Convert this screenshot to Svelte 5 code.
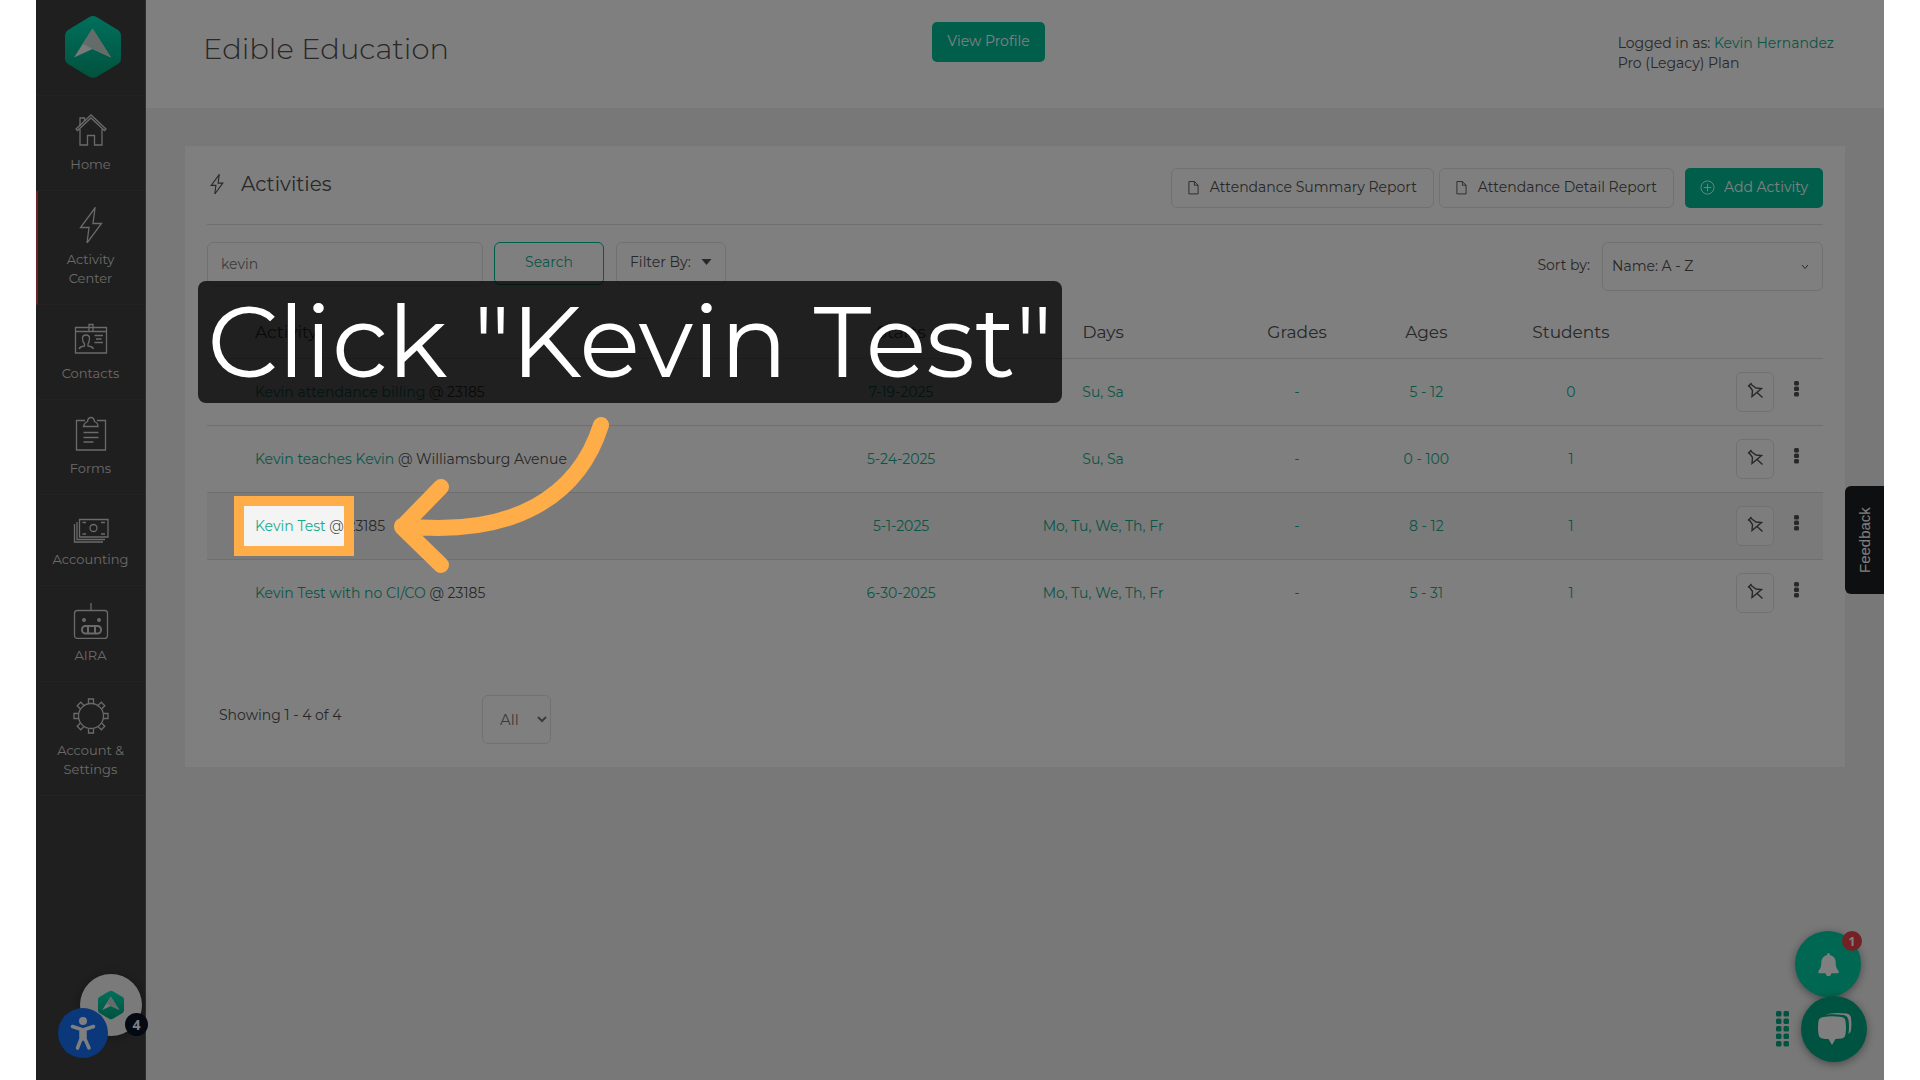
<script>
  const rows = [
    { name: 'Kevin attendance billing', place: '23185', starts: '7-19-2025', days: 'Su, Sa', grades: '-', ages: '5 - 12', students: '0' },
    { name: 'Kevin teaches Kevin', place: 'Williamsburg Avenue', starts: '5-24-2025', days: 'Su, Sa', grades: '-', ages: '0 - 100', students: '1' },
    { name: 'Kevin Test', place: '23185', starts: '5-1-2025', days: 'Mo, Tu, We, Th, Fr', grades: '-', ages: '8 - 12', students: '1', active: true },
    { name: 'Kevin Test with no CI/CO', place: '23185', starts: '6-30-2025', days: 'Mo, Tu, We, Th, Fr', grades: '-', ages: '5 - 31', students: '1' }
  ];
  const nav = [
    { label: 'Home', icon: 'home', height: 36 },
    { label: 'Activity Center', icon: 'bolt', height: 36, current: true },
    { label: 'Contacts', icon: 'contacts', height: 36 },
    { label: 'Forms', icon: 'forms', height: 36 },
    { label: 'Accounting', icon: 'money', height: 32 },
    { label: 'AIRA', icon: 'robot', height: 37 },
    { label: 'Account & Settings', icon: 'gear', height: 36 }
  ];
  const teeth = [0, 45, 90, 135, 180, 225, 270, 315];
  let query = $state('kevin');
</script>

{#snippet hexLogo(id)}
  <svg class="hex" viewBox="0 0 56 62" aria-hidden="true">
    <defs>
      <linearGradient id={id} x1="0" y1="0" x2="0" y2="1">
        <stop offset="0" stop-color="#00e0b8" />
        <stop offset="1" stop-color="#00a57c" />
      </linearGradient>
    </defs>
    <path fill="url(#{id})" d="M24 1.2Q28-1 32 1.2L53 14Q56 16 56 19V43Q56 46 53 48L32 60.8Q28 63 24 60.8L3 48Q0 46 0 43V19Q0 16 3 14Z" />
    <path fill="#f2f6f5" d="M27.500 12.500L46 41.500L27.500 33L9 41.500Z" />
    <path fill="#c9d9d5" d="M27.500 12.500L46 41.500L27.500 33L18 28Z" />
  </svg>
{/snippet}

{#snippet boltPath()}
  <path d="M22 1L7.500 20.500H16L14 36L28.500 16.500H20Z" />
{/snippet}

<div class="frame">
  <nav class="sidebar" aria-label="Main">
    <a class="brand" href="#top" aria-label="Start page">{@render hexLogo('hexMain')}</a>
    {#each nav as item}
      <a class="item" class:current={item.current} href="#{item.icon}">
        <svg class="icon" width="36" height={item.height} viewBox="0 0 36 {item.height}" aria-hidden="true">
          {#if item.icon === 'home'}
            <path d="M3 17L18 3L33 17L31.500 18.500L18 6L4.500 18.500Z" />
            <path d="M7 17V33H14.500V23.500H21.500V33H29V17M7 14V6H11.500V9" />
          {:else if item.icon === 'bolt'}
            {@render boltPath()}
          {:else if item.icon === 'contacts'}
            <path d="M2.500 6.500H33.500V32H2.500ZM2.500 10.500H33.500" />
            <path d="M16 10.500V3.500H20V10.500" />
            <path d="M6 28Q7 25.500 11.500 25V23Q9.500 20.500 9.500 17.500Q9.500 14 13 14T16.500 17.500Q16.500 20.500 15 23V25Q19.500 25.500 20.500 28M21.500 14.500H30M23 18H28.500M21.500 21.500H30" />
          {:else if item.icon === 'forms'}
            <path d="M12 4.500H3.500V34H32.500V4.500H24M10.500 10.500H25Q25 7 21.500 5.500Q21 1.500 18 1.500T14.500 5.500Q11 7 10.500 10.500ZM10.500 16.500H25.500M10.500 21.500H25.500M10.500 26H20.500" />
          {:else if item.icon === 'money'}
            <path d="M6.500 8.500H35V26H6.500ZM4 11V28.500H32M1.500 13V31H30" />
            <circle cx="20.500" cy="17" r="3.500" />
            <path d="M9.500 11.500H13M28 11.500H32M9.500 23H13M28 23H32" />
          {:else if item.icon === 'robot'}
            <rect x="1.500" y="8.500" width="33" height="28" rx="3" />
            <path d="M18 1V8.500" />
            <circle class="solid" cx="11" cy="18" r="2" />
            <circle class="solid" cx="26" cy="18" r="2" />
            <rect class="thick" x="9" y="24" width="19" height="7.500" rx="3.500" />
            <path class="thick" d="M15 24V31.500M22 24V31.500" />
          {:else}
            <circle cx="18" cy="18" r="12.500" />
            {#each teeth as angle}
              <path transform="rotate({angle} 18 18)" d="M15.500 5.500V1H20.500V5.500" />
            {/each}
          {/if}
        </svg>
        <span>{item.label}</span>
      </a>
    {/each}
  </nav>

  <div class="page">
    <header class="top">
      <h1>Edible Education</h1>
      <button class="solid-button profile">View Profile</button>
      <p class="account">Logged in as: <a href="#user">Kevin Hernandez</a><br />Pro (Legacy) Plan</p>
    </header>

    <main class="card">
      <div class="card-head">
        <h2>
          <svg class="small-bolt" viewBox="0 0 36 36" aria-hidden="true">{@render boltPath()}</svg>
          Activities
        </h2>
        <div class="actions">
          {#each ['Attendance Summary Report', 'Attendance Detail Report'] as report}
            <button class="plain">
              <svg class="doc" viewBox="0 0 12 16" aria-hidden="true"><path d="M1 1.500H7L11 5.500V15H1ZM7 1.500V5.500H11" /></svg>
              {report}
            </button>
          {/each}
          <button class="solid-button add">
            <svg class="plus" viewBox="0 0 16 16" aria-hidden="true"><circle cx="8" cy="8" r="7" /><path d="M8 4V12M4 8H12" /></svg>
            Add Activity
          </button>
        </div>
      </div>

      <div class="filters">
        <input type="text" aria-label="Search activities" bind:value={query} />
        <button class="search">Search</button>
        <button class="plain filter">Filter By:
          <svg class="caret" viewBox="0 0 10 6" aria-hidden="true"><path d="M0 0H10L5 6Z" /></svg>
        </button>
        <label for="sort">Sort by:</label>
        <div class="sort">
          <select id="sort"><option>Name: A - Z</option></select>
          <svg viewBox="0 0 8 6" aria-hidden="true"><path d="M1 1L4 4.500L7 1" /></svg>
        </div>
      </div>

      <table>
        <colgroup>
          <col /><col class="c-starts" /><col class="c-days" /><col class="c-grades" /><col class="c-ages" /><col class="c-students" /><col class="c-tools" />
        </colgroup>
        <thead>
          <tr>
            <th class="name">Activity</th><th>Starts</th><th>Days</th><th>Grades</th><th>Ages</th><th>Students</th><td></td>
          </tr>
        </thead>
        <tbody>
          {#each rows as row}
            <tr class:active={row.active}>
              <td class="name"><a href="#activity">{row.name}</a> @ {row.place}</td>
              <td>{row.starts}</td>
              <td>{row.days}</td>
              <td>{row.grades}</td>
              <td>{row.ages}</td>
              <td>{row.students}</td>
              <td>
                <div class="tools">
                  <button class="pin" aria-label="Pin {row.name}">
                    <svg viewBox="0 0 16 16" aria-hidden="true"><path d="M1 4.500L4.500 1M2 3.500L5.500 8.500L5 14.500L14.500 6.500L9 6L3.500 2M9.500 10L15.500 15.500" /></svg>
                  </button>
                  <button class="more" aria-label="More for {row.name}">
                    <svg viewBox="0 0 5 16" aria-hidden="true">
                      <rect width="5" height="4.500" rx="1.500" />
                      <rect y="5.500" width="5" height="4.500" rx="1.500" />
                      <rect y="11" width="5" height="4.500" rx="1.500" />
                    </svg>
                  </button>
                </div>
              </td>
            </tr>
          {/each}
        </tbody>
      </table>

      <footer>
        <span>Showing 1 - 4 of 4</span>
        <select aria-label="Rows per page"><option>All</option></select>
      </footer>
    </main>
  </div>

  <button class="feedback">Feedback</button>

  <button class="launcher" aria-label="Resources">{@render hexLogo('hexSmall')}</button>
  <span class="count">4</span>
  <button class="access" aria-label="Accessibility">
    <svg viewBox="0 0 50 50" aria-hidden="true">
      <circle cx="25" cy="13" r="4" />
      <path d="M14.500 18.500L25 22L35.500 18.500M23 22V31L19.500 40M27 22V31L31 40M25 22V31" />
    </svg>
  </button>

  <button class="round bell" aria-label="Notifications">
    <svg viewBox="0 0 24 26" aria-hidden="true"><path d="M12 1Q13.500 1 13.500 3Q19.500 4.500 19.500 11Q19.500 17 22 19Q23 20 22.500 22H15Q14.500 25 12 25T9 22H1.500Q1 20 2 19Q4.500 17 4.500 11Q4.500 4.500 10.500 3Q10.500 1 12 1Z" /></svg>
  </button>
  <span class="alert">1</span>
  <button class="round chat" aria-label="Chat">
    <svg viewBox="0 0 34 34" aria-hidden="true">
      <path d="M6 5Q14 3.500 24 5Q27.500 5.500 28 9Q29 16 28 22Q27.500 26 24 26.500L18 27L14.500 33L11 27Q8 27 5 26.500Q1.500 26 1 22Q0 15 1 9Q1.500 5.500 6 5Z" />
      <path d="M7 2.500Q17 0 29 1.500Q33 2 33.500 6Q34.500 15 33 20L31 22Q32 14 31 8Q30.500 4 26 3Q17 2 7 2.500Z" />
    </svg>
  </button>
  <svg class="grip" viewBox="0 0 13 36" aria-hidden="true">
    {#each [0, 1, 2, 3, 4] as n}
      <rect x="0" y={n * 7.5} width="5.500" height="5.500" rx="1.500" />
      <rect x="7.500" y={n * 7.5} width="5.500" height="5.500" rx="1.500" />
    {/each}
  </svg>

  <div class="spotlight"></div>
  <div class="callout">Click "Kevin Test"</div>
  <svg class="arrow" viewBox="0 0 220 170" aria-hidden="true">
    <path d="M211 15C189 85 125 128 12 116M51 77L12 117L51 155" />
  </svg>
</div>

<style>
  :global(body) {
    margin: 0;
    background: #fff;
  }
  .frame {
    position: relative;
    display: flex;
    min-height: 100vh;
    margin: 0 36px;
    overflow: hidden;
    background: #f0f0f0;
    color: #505050;
    font: 400 14px/20px Montserrat, Inter, "Open Sans", sans-serif;
  }
  .frame *, .frame *::before { box-sizing: border-box; }
  button, input, select {
    font: inherit;
    color: inherit;
    margin: 0;
  }
  button { cursor: pointer; }
  svg { fill: none; stroke: currentColor; flex: none; }
  a { color: #15ab8c; text-decoration: none; }

  .sidebar {
    width: 110px;
    flex: none;
    background: #3e3e3e;
    border-right: 1px solid #5c5c5c;
  }
  .brand {
    display: flex;
    justify-content: center;
    height: 96px;
    padding: 16px 0 0 5px;
    border-bottom: 1px solid #474747;
  }
  .hex { width: 56px; height: 62px; stroke: none; }
  .item {
    display: flex;
    flex-direction: column;
    align-items: center;
    gap: 7px;
    padding: 16px 13px 16px 11px;
    border-bottom: 1px solid #474747;
    border-left: 2px solid transparent;
    color: #d4d4d4;
    font-size: 13px;
    line-height: 19px;
    text-align: center;
  }
  .current { border-left-color: #d9434f; }
  .icon { stroke-width: 1.3; }
  .solid { fill: currentColor; stroke: none; }
  .thick { stroke-width: 2; }

  .page { flex: 1; min-width: 0; }
  .top {
    display: grid;
    grid-template-columns: 1fr auto 1fr;
    align-items: start;
    height: 108px;
    padding: 22px 50px 0 57px;
    background: #fff;
  }
  h1 {
    margin: 7px 0 0;
    font-size: 29px;
    line-height: 40px;
    font-weight: 300;
  }
  .solid-button {
    height: 40px;
    padding: 0 15px 2px;
    border: 0;
    border-radius: 5px;
    background: #00bd97;
    color: #fff;
  }
  .profile { margin-right: 60px; }
  .account { justify-self: end; margin: 11px 0 0; }

  .card {
    margin: 38px 39px 0;
    padding: 22px 22px 23px;
    background: #fff;
  }
  .card-head {
    display: flex;
    justify-content: space-between;
    height: 57px;
    border-bottom: 1px solid #e0e0e0;
  }
  h2 {
    display: flex;
    align-items: center;
    gap: 14px;
    height: 31px;
    margin: 0;
    font-size: 20px;
    font-weight: 400;
  }
  .small-bolt { width: 20px; height: 20px; stroke-width: 2; }
  .actions { display: flex; gap: 5px; }
  .plain {
    display: flex;
    align-items: center;
    gap: 11px;
    height: 40px;
    padding: 0 16px 2px;
    border: 1px solid #e2e2e2;
    border-radius: 6px;
    background: #fff;
  }
  .doc { width: 11px; height: 15px; }
  .add { display: flex; align-items: center; gap: 9px; margin-left: 6px; }
  .plus { width: 15px; height: 15px; }

  .filters {
    display: flex;
    align-items: flex-start;
    height: 66px;
    padding-top: 17px;
  }
  input {
    width: 276px;
    height: 44px;
    padding: 0 13px;
    border: 1px solid #e2e2e2;
    border-radius: 6px;
    background: #fff;
    color: #777;
  }
  .search {
    width: 110px;
    height: 43px;
    margin: 0 12px 0 11px;
    padding: 0 0 3px;
    border: 1px solid #00bd97;
    border-radius: 6px;
    background: #fff;
    color: #15ab8c;
  }
  .filter { height: 43px; padding: 0 13px 3px; gap: 10px; }
  .caret { width: 11px; height: 6px; fill: #505050; stroke: none; }
  label { margin: 13px 12px 0 auto; }
  .sort { display: grid; width: 221px; align-items: center; }
  .sort select {
    grid-area: 1 / 1;
    width: 100%;
    height: 49px;
    padding: 0 9px 1px;
    appearance: none;
    border: 1px solid #e2e2e2;
    border-radius: 6px;
    background: #fff;
  }
  .sort svg {
    grid-area: 1 / 1;
    justify-self: end;
    width: 8px;
    height: 6px;
    margin-right: 14px;
    pointer-events: none;
  }

  table { width: 100%; table-layout: fixed; border-collapse: collapse; }
  .c-starts, .c-days { width: 12.5%; }
  .c-grades { width: 11.5%; }
  .c-ages { width: 4.5%; }
  .c-students { width: 13.4%; }
  .c-tools { width: 8.9%; }
  th {
    height: 67px;
    padding: 16px 0 0;
    font-size: 17px;
    font-weight: 400;
    white-space: nowrap;
  }
  td { padding: 0; text-align: center; color: #15ab8c; white-space: nowrap; }
  tbody td { height: 67px; }
  thead, tbody tr:not(:last-child) { border-bottom: 1px solid #dedede; }
  th.name, td.name { padding-left: 48px; text-align: left; }
  td.name { color: #505050; }
  .active { background: #f4f4f4; }
  .tools { display: flex; align-items: center; justify-content: flex-end; gap: 20px; padding-right: 24px; color: #505050; }
  .pin {
    display: grid;
    place-items: center;
    width: 38px;
    height: 40px;
    padding: 0 0 4px;
    border: 1px solid #e2e2e2;
    border-radius: 6px;
    background: #fff;
  }
  .active .pin { background: #fafafa; }
  .pin svg { width: 16px; height: 16px; stroke-width: 1.4; }
  .more { padding: 0 0 5px; border: 0; background: none; line-height: 0; }
  .more svg { width: 5px; height: 16px; fill: currentColor; stroke: none; }

  footer { display: flex; gap: 158px; padding: 69px 0 0 12px; }
  footer span { width: 105px; padding-top: 10px; white-space: nowrap; }
  footer select {
    width: 69px;
    height: 49px;
    padding: 0 0 0 13px;
    border: 1px solid #e2e2e2;
    border-radius: 6px;
    background: #fff;
    font-size: 15px;
    color: #777;
  }

  .feedback {
    position: absolute;
    top: 486px;
    right: 0;
    width: 39px;
    height: 108px;
    padding: 0;
    border: 0;
    border-radius: 0 6px 6px 0;
    background: #1c1f22;
    color: #fff;
    font: 15px "Liberation Sans", sans-serif;
    writing-mode: vertical-rl;
    transform: rotate(180deg);
  }
  .launcher, .access, .round, .count, .alert {
    position: absolute;
    display: grid;
    place-items: center;
    padding: 0;
    border: 0;
    border-radius: 50%;
    color: #fff;
  }
  .launcher {
    left: 44px;
    bottom: 44px;
    width: 62px;
    height: 62px;
    background: #f4f4f4;
    box-shadow: 0 1px 8px rgba(0, 0, 0, .3);
  }
  .launcher .hex { width: 26px; height: 30px; }
  .count {
    left: 89px;
    bottom: 44px;
    width: 23px;
    height: 23px;
    background: #0b1222;
    font: 700 14px "Open Sans", sans-serif;
  }
  .access {
    left: 22px;
    bottom: 22px;
    width: 50px;
    height: 50px;
    background: #1570f5;
  }
  .access svg { width: 50px; height: 50px; stroke-width: 3.5; stroke-linecap: round; stroke-linejoin: round; }
  .access circle { fill: currentColor; stroke: none; }
  .round { width: 66px; height: 66px; box-shadow: 0 2px 8px rgba(0, 0, 0, .4); }
  .round svg { fill: currentColor; stroke: none; }
  .bell { right: 23px; bottom: 83px; background: #00cfa4; }
  .bell svg { width: 23px; height: 25px; }
  .chat { right: 17px; bottom: 18px; background: #00a681; }
  .chat svg { width: 35px; height: 34px; }
  .alert {
    right: 22px;
    bottom: 129px;
    width: 20px;
    height: 20px;
    background: #e8434c;
    font: 700 12px "Open Sans", sans-serif;
  }
  .grip {
    position: absolute;
    right: 95px;
    bottom: 33px;
    width: 13px;
    height: 36px;
    fill: #00a681;
    stroke: none;
  }

  .spotlight {
    position: absolute;
    top: 506px;
    left: 208px;
    width: 100px;
    height: 40px;
    outline: 10px solid #ffad48;
    box-shadow: 0 0 0 3000px rgba(0, 0, 0, .5);
    pointer-events: none;
  }
  .callout {
    position: absolute;
    top: 281px;
    left: 162px;
    width: 864px;
    padding: 0 0 2px;
    border-radius: 8px;
    background: rgba(0, 0, 0, .75);
    color: #fff;
    font-size: 100px;
    line-height: 120px;
    text-align: center;
    white-space: nowrap;
  }
  .arrow {
    position: absolute;
    top: 410px;
    left: 354px;
    width: 220px;
    height: 170px;
    stroke: #ffad48;
    stroke-width: 16;
    stroke-linecap: round;
    stroke-linejoin: round;
    pointer-events: none;
  }
</style>
